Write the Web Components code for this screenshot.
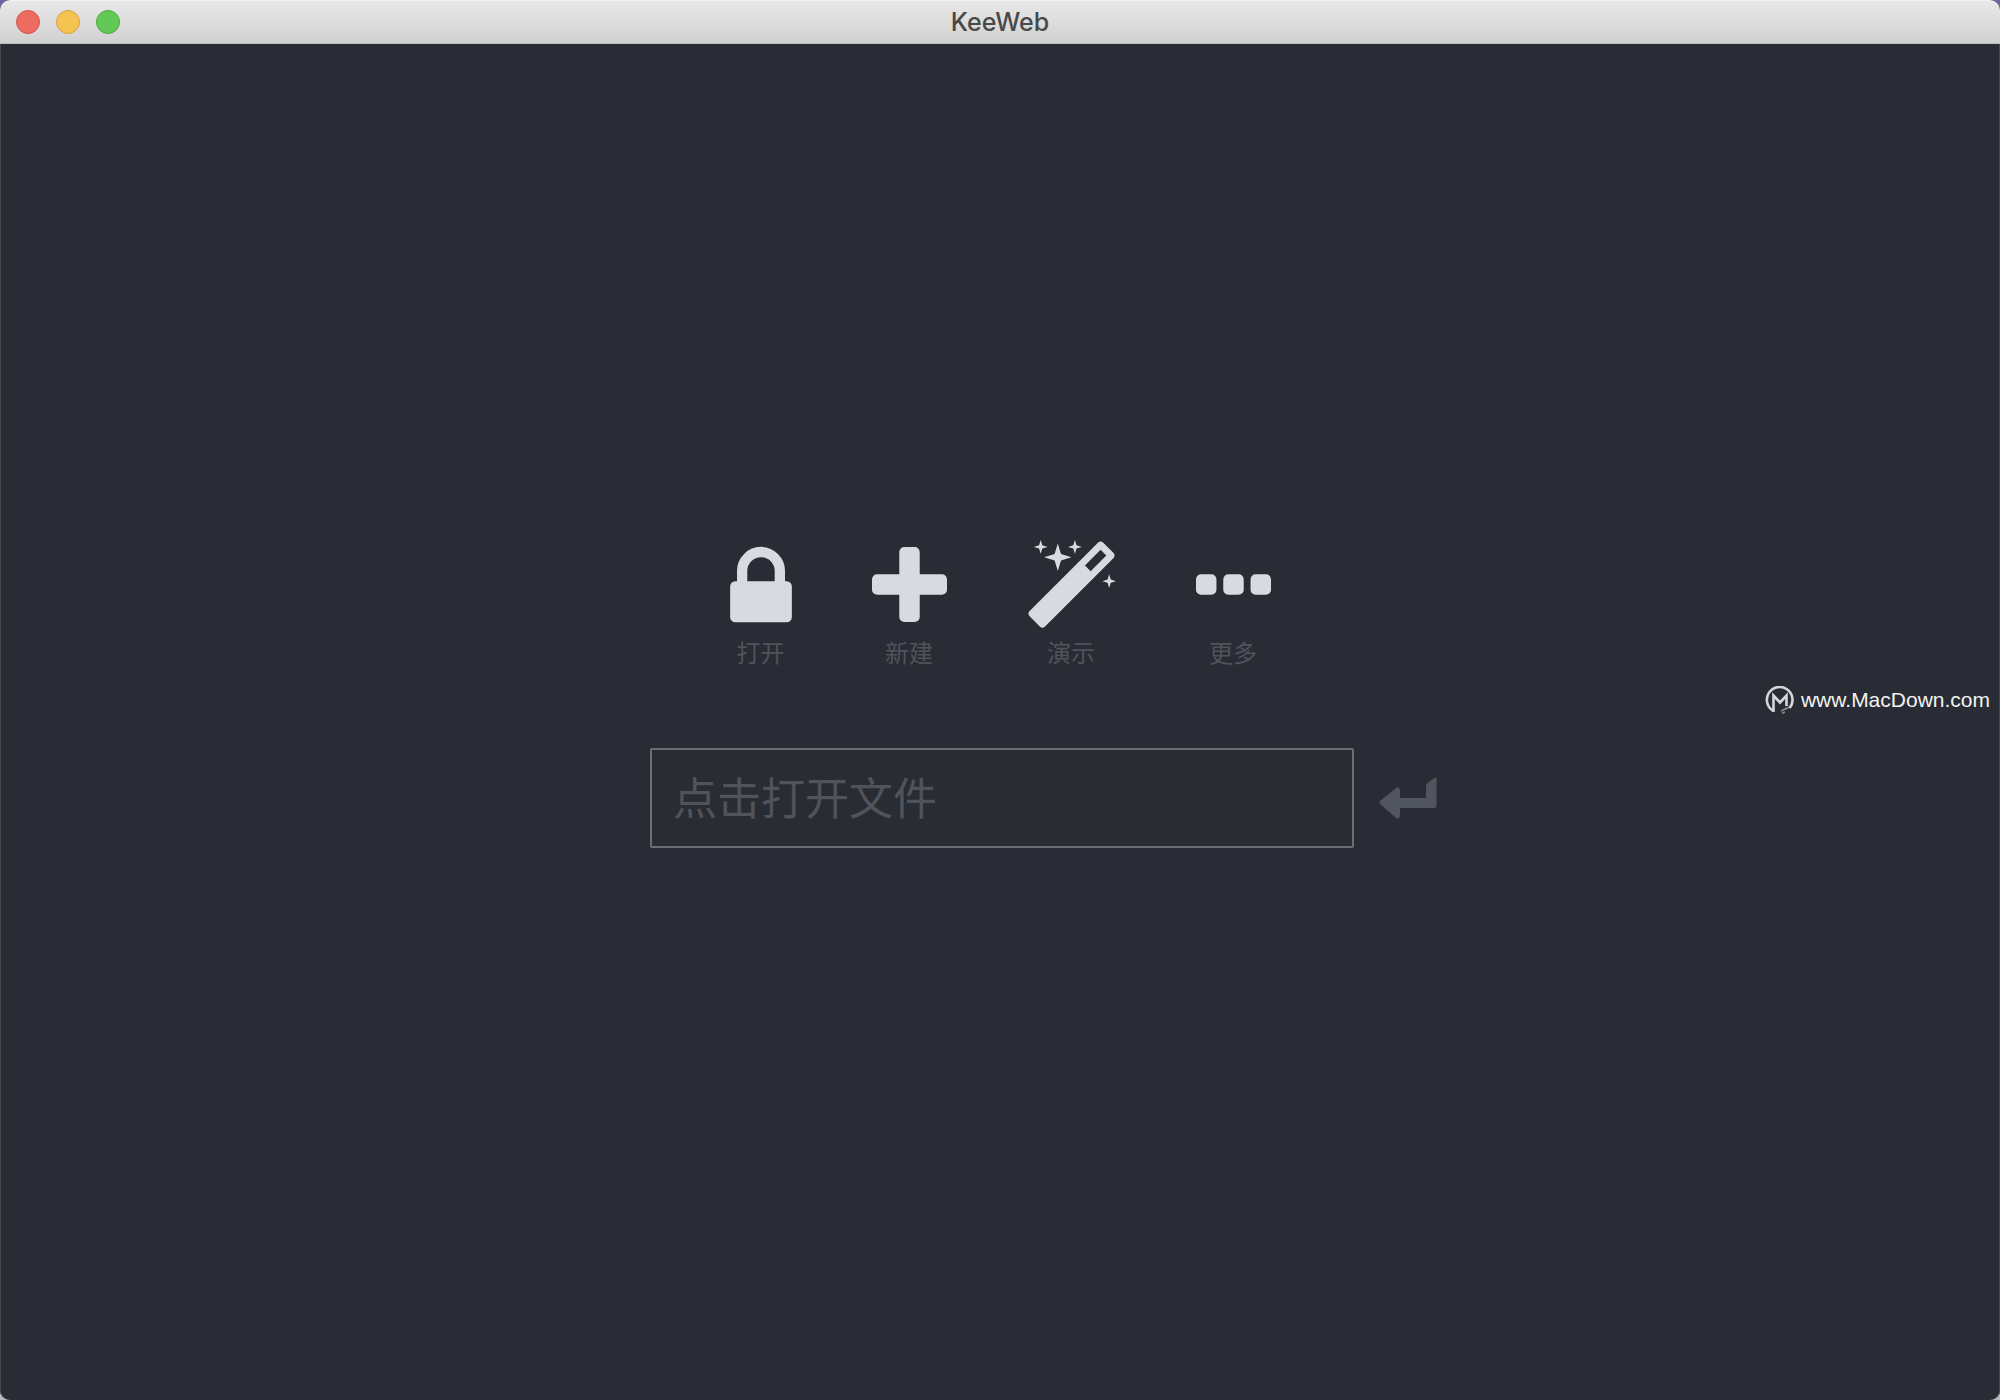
<!DOCTYPE html>
<html lang="zh-CN">
<head>
<meta charset="utf-8">
<title>KeeWeb</title>
<style>
html, body { height: 100%; margin: 0; }
body { background: linear-gradient(#6c63a6 0, #6c63a6 40px, #b9babd 60px, #b9babd 100%); }
</style>
</head>
<body>
<app-window>
  <title-bar slot="bar">KeeWeb</title-bar>
  <open-actions>
    <open-action icon="lock">打开</open-action>
    <open-action icon="plus">新建</open-action>
    <open-action icon="magic">演示</open-action>
    <open-action icon="more">更多</open-action>
  </open-actions>
  <open-form></open-form>
  <site-mark slot="mark">www.MacDown.com</site-mark>
</app-window>
<script>
function define(name, html, setup) {
  const template = document.createElement('template');
  template.innerHTML = html;
  customElements.define(name, class extends HTMLElement {
    constructor() {
      super();
      this.attachShadow({ mode: 'open' }).append(template.content.cloneNode(true));
    }
    connectedCallback() { if (setup) setup(this); }
  });
}

define('app-window', `
<style>
:host { display: flex; flex-direction: column; position: relative; box-sizing: border-box; min-height: 100vh;
  overflow: hidden; border-radius: 10px; background: #292c34; box-shadow: inset 1px 0 #44474e, inset -1px 0 #44474e;
  font-family: "Noto Sans", "Noto Sans CJK SC", sans-serif; }
main { flex: 1; display: flex; flex-direction: column; align-items: center; justify-content: center; gap: 78px;
  padding-bottom: 56px; }
</style>
<slot name="bar"></slot><main><slot></slot></main><slot name="mark"></slot>`);

define('title-bar', `
<style>
:host { display: grid; grid-template-columns: 1fr auto 1fr; align-items: center; box-sizing: border-box; height: 44px;
  padding: 0 16px; background: linear-gradient(#e8e8e8, #d0d1d0); border-top: 1px solid #f4f4f4;
  border-bottom: 1px solid #b8babb; color: #484848; font: 500 25px/42px Inter, sans-serif; }
.lights { display: flex; gap: 16px; }
button { width: 24px; height: 24px; padding: 0; border: 1px solid; border-radius: 50%; }
.close { background: #ed6b60; border-color: #cf554c; }
.min { background: #f5c351; border-color: #d6a243; }
.max { background: #62c956; border-color: #4aa73e; }
</style>
<div class="lights"><button class="close" aria-label="关闭"></button><button class="min" aria-label="最小化"></button><button class="max" aria-label="缩放"></button></div>
<slot></slot>`);

define('open-actions', `<style>:host { display: flex; gap: 80px; }</style><slot></slot>`);

const icons = {
  lock: [1152, 62, 'M320 768h512v-192q0-106-75-181t-181-75-181 75-75 181v192zm832 96v576q0 40-28 68t-68 28h-960q-40 0-68-28t-28-68v-576q0-40 28-68t68-28h32v-192q0-184 132-316t316-132 316 132 132 316v192h32q40 0 68 28t28 68z'],
  plus: [1408, 75, 'M1408 736v192q0 40-28 68t-68 28h-416v416q0 40-28 68t-68 28h-192q-40 0-68-28t-28-68v-416h-416q-40 0-68-28t-28-68v-192q0-40 28-68t68-28h416v-416q0-40 28-68t68-28h192q40 0 68 28t28 68v416h416q40 0 68 28t28 68z'],
  magic: [1664, 89, 'M1190 581l293-293-107-107-293 293zm447-293q0 27-18 45l-1286 1286q-18 18-45 18t-45-18l-198-198q-18-18-18-45t18-45l1286-1286q18-18 45-18t45 18l198 198q18 18 18 45zm-1351-190l98 30-98 30-30 98-30-98-98-30 98-30 30-98zm350 162l196 60-196 60-60 196-60-196-196-60 196-60 60-196zm930 478l98 30-98 30-30 98-30-98-98-30 98-30 30-98zm-640-640l98 30-98 30-30 98-30-98-98-30 98-30 30-98z'],
  more: [1408, 75, 'M384 736v192q0 40-28 68t-68 28h-192q-40 0-68-28t-28-68v-192q0-40 28-68t68-28h192q40 0 68 28t28 68zm512 0v192q0 40-28 68t-68 28h-192q-40 0-68-28t-28-68v-192q0-40 28-68t68-28h192q40 0 68 28t28 68zm512 0v192q0 40-28 68t-68 28h-192q-40 0-68-28t-28-68v-192q0-40 28-68t68-28h192q40 0 68 28t28 68z']
};
define('open-action', `
<style>
:host { display: block; }
button { display: flex; flex-direction: column; align-items: center; padding: 0; border: 0; background: none;
  color: #50535b; font: inherit; font-size: 24px; line-height: 34px; cursor: pointer; }
svg { display: block; height: 96px; fill: #d9dae0; overflow: visible; }
</style>
<button><svg aria-hidden="true"><path/></svg><span><slot></slot></span></button>`, el => {
  const [units, width, d] = icons[el.getAttribute('icon')];
  const svg = el.shadowRoot.querySelector('svg');
  svg.setAttribute('viewBox', `0 0 ${units} 1792`);
  svg.setAttribute('width', width);
  svg.firstElementChild.setAttribute('d', d);
});

define('open-form', `
<style>
:host { display: block; align-self: stretch; }
form { display: grid; grid-template-columns: 1fr minmax(0, 704px) 1fr; align-items: center; column-gap: 25px;
  padding-left: 4px; }
input { grid-column: 2; box-sizing: border-box; width: 100%; height: 100px; margin: 0; padding: 0 21px;
  border: 2px solid #6b6e77; border-radius: 2px; background: #292c32; color: #d9dbe2; font: inherit; font-size: 44px;
  outline: 0; }
input::placeholder { color: #50535b; opacity: 1; }
button { justify-self: start; padding: 0; border: 0; background: none; }
svg { display: block; fill: #50555e; }
</style>
<form><input type="text" placeholder="点击打开文件" aria-label="点击打开文件" readonly>
<button type="button" aria-label="确定"><svg width="58" height="42" viewBox="0 0 58 42"><path d="M1 24Q0 25.500 1 27L17 41Q21 43 21 38V31H55.500Q57.500 31 57.500 29V1.500Q57 0 55.500 1L48 6.500Q47 7.300 47 8.500V21H21V13Q20 9 17 11Z"/></svg></button></form>`);

define('site-mark', `
<style>
:host { position: absolute; right: 10px; top: 50%; transform: translateY(-50%); display: flex; align-items: center;
  gap: 6px; color: #f2f2f2; font: 21px/28px "Liberation Sans", sans-serif; }
svg { display: block; fill: none; stroke: #d4d6da; }
</style>
<svg width="30" height="28" viewBox="0 0 30 28" aria-hidden="true">
<path stroke-width="2.600" d="M8.500 26V9.500L15 16.500L21.500 9.500V20M8.500 25A12.800 12.800 0 1 1 24.500 22"/>
<path stroke-width="1.500" stroke="#85888e" d="M16 25L22 22M17 27.300L20 26M20 23.500L24 21"/></svg><span><slot></slot></span>`);
</script>
</body>
</html>
